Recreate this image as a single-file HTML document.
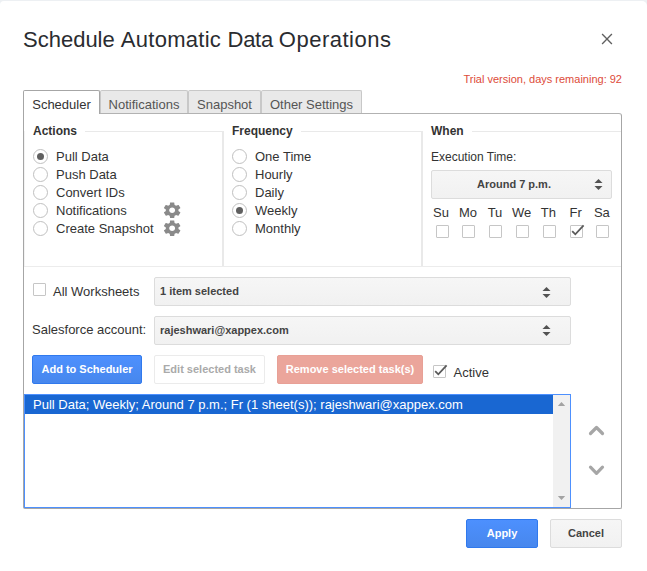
<!DOCTYPE html>
<html>
<head>
<meta charset="utf-8">
<title>Schedule Automatic Data Operations</title>
<style>
html,body{margin:0;padding:0;}
body{width:647px;height:571px;position:relative;overflow:hidden;background:#edf0f3;font-family:"Liberation Sans",sans-serif;font-size:13px;color:#333;}
.abs{position:absolute;white-space:nowrap;}
#topband{left:0;top:1px;width:647px;height:570px;background:#fff;border-radius:4px 5px 0 0;}
#title{left:23px;top:26px;font-size:22px;line-height:28px;color:#2a2c30;}
#trial{right:25px;top:72px;font-size:11px;line-height:14px;color:#dd4b39;}
.tab{top:90px;height:23px;line-height:27px;border:1px solid #c8c8c8;border-bottom:none;background:#e9e9e9;color:#555;font-size:13px;text-align:center;box-sizing:border-box;border-radius:2px 2px 0 0;}
.tab.active{background:#fff;color:#333;height:24px;border-color:#a6a6a6;z-index:2;}
#panel{left:23px;top:113px;width:599px;height:396px;border:1px solid #a6a6a6;border-top-color:#b2b2b2;box-sizing:border-box;border-radius:0 3px 2px 2px;}
.legend{font-weight:bold;font-size:12px;line-height:14px;color:#333;}
.hline{height:1px;background:#e9e9e9;}
.vline{width:2px;background:#e9e9e9;}
.radio{width:15px;height:15px;border:1px solid #c0c0c0;border-radius:50%;box-sizing:border-box;background:#fff;}
.radio.on::after{content:"";position:absolute;left:3px;top:3px;width:7px;height:7px;border-radius:50%;background:#606060;}
.lbl{font-size:13px;line-height:18px;color:#333;}
.day{font-size:13px;line-height:18px;color:#333;width:30px;text-align:center;top:204px;}
.cb{width:13px;height:13px;border:1px solid #c6c6c6;box-sizing:border-box;background:#fff;border-radius:1px;}
.sel{box-sizing:border-box;border:1px solid #dcdcdc;background:linear-gradient(#f6f6f6,#f1f1f1);border-radius:2px;font-weight:bold;font-size:11px;color:#444;height:29px;line-height:27px;}
.btn{box-sizing:border-box;height:29px;line-height:27px;font-size:11px;font-weight:bold;text-align:center;border-radius:2px;}
svg.abs{overflow:visible;}
</style>
</head>
<body>
<div class="abs" id="topband"></div>
<div class="abs" id="title"><span>Schedule </span><span style="letter-spacing:0.27px">Automatic </span><span style="letter-spacing:-0.26px">Data </span><span style="letter-spacing:0.5px">Operations</span></div>
<svg class="abs" style="left:600px;top:32px" width="14" height="14" viewBox="0 0 14 14"><path d="M2.1 2.1 L11.9 11.9 M11.9 2.1 L2.1 11.9" stroke="#606060" stroke-width="1.35" fill="none"/></svg>
<div class="abs" id="trial">Trial version, days remaining: 92</div>

<div class="abs tab active" style="left:23px;width:77px;">Scheduler</div>
<div class="abs tab" style="left:100px;width:88px;">Notifications</div>
<div class="abs tab" style="left:188px;width:73px;">Snapshot</div>
<div class="abs tab" style="left:261px;width:101px;">Other Settings</div>
<div class="abs" id="panel"></div>

<!-- Actions -->
<div class="abs legend" style="left:33px;top:124px;">Actions</div>
<div class="abs hline" style="left:85px;top:131px;width:139px;"></div>
<div class="abs vline" style="left:222px;top:131px;height:135px;"></div>
<div class="abs radio on" style="left:33px;top:149px;"></div><div class="abs lbl" style="left:56px;top:148px;">Pull Data</div>
<div class="abs radio" style="left:33px;top:167px;"></div><div class="abs lbl" style="left:56px;top:166px;">Push Data</div>
<div class="abs radio" style="left:33px;top:185px;"></div><div class="abs lbl" style="left:56px;top:184px;">Convert IDs</div>
<div class="abs radio" style="left:33px;top:203px;"></div><div class="abs lbl" style="left:56px;top:202px;">Notifications</div>
<div class="abs radio" style="left:33px;top:221px;"></div><div class="abs lbl" style="left:56px;top:220px;">Create Snapshot</div>
<svg class="abs" style="left:161.8px;top:201px" width="20.3" height="18.6" viewBox="0 0 24 24" preserveAspectRatio="none"><path fill="#8a8a8a" d="M19.43 12.98c.04-.32.07-.64.07-.98s-.03-.66-.07-.98l2.11-1.65c.19-.15.24-.42.12-.64l-2-3.46c-.12-.22-.39-.3-.61-.22l-2.49 1c-.52-.4-1.08-.73-1.69-.98l-.38-2.65C14.46 2.18 14.25 2 14 2h-4c-.25 0-.46.18-.49.42l-.38 2.65c-.61.25-1.17.59-1.69.98l-2.49-1c-.23-.09-.49 0-.61.22l-2 3.46c-.13.22-.07.49.12.64l2.11 1.65c-.04.32-.07.65-.07.98s.03.66.07.98l-2.11 1.65c-.19.15-.24.42-.12.64l2 3.46c.12.22.39.3.61.22l2.49-1c.52.4 1.08.73 1.69.98l.38 2.65c.03.24.24.42.49.42h4c.25 0 .46-.18.49-.42l.38-2.65c.61-.25 1.17-.59 1.69-.98l2.49 1c.23.09.49 0 .61-.22l2-3.46c.12-.22.07-.49-.12-.64l-2.11-1.65zM12 15.5c-1.93 0-3.5-1.57-3.5-3.5s1.57-3.5 3.5-3.5 3.5 1.57 3.5 3.5-1.57 3.5-3.5 3.5z"/></svg>
<svg class="abs" style="left:161.8px;top:219px" width="20.3" height="18.6" viewBox="0 0 24 24" preserveAspectRatio="none"><path fill="#8a8a8a" d="M19.43 12.98c.04-.32.07-.64.07-.98s-.03-.66-.07-.98l2.11-1.65c.19-.15.24-.42.12-.64l-2-3.46c-.12-.22-.39-.3-.61-.22l-2.49 1c-.52-.4-1.08-.73-1.69-.98l-.38-2.65C14.46 2.18 14.25 2 14 2h-4c-.25 0-.46.18-.49.42l-.38 2.65c-.61.25-1.17.59-1.69.98l-2.49-1c-.23-.09-.49 0-.61.22l-2 3.46c-.13.22-.07.49.12.64l2.11 1.65c-.04.32-.07.65-.07.98s.03.66.07.98l-2.11 1.65c-.19.15-.24.42-.12.64l2 3.46c.12.22.39.3.61.22l2.49-1c.52.4 1.08.73 1.69.98l.38 2.65c.03.24.24.42.49.42h4c.25 0 .46-.18.49-.42l.38-2.65c.61-.25 1.17-.59 1.69-.98l2.49 1c.23.09.49 0 .61-.22l2-3.46c.12-.22.07-.49-.12-.64l-2.11-1.65zM12 15.5c-1.93 0-3.5-1.57-3.5-3.5s1.57-3.5 3.5-3.5 3.5 1.57 3.5 3.5-1.57 3.5-3.5 3.5z"/></svg>

<!-- Frequency -->
<div class="abs legend" style="left:232px;top:124px;">Frequency</div>
<div class="abs hline" style="left:301px;top:131px;width:122px;"></div>
<div class="abs vline" style="left:421px;top:131px;height:135px;"></div>
<div class="abs radio" style="left:232px;top:149px;"></div><div class="abs lbl" style="left:255px;top:148px;">One Time</div>
<div class="abs radio" style="left:232px;top:167px;"></div><div class="abs lbl" style="left:255px;top:166px;">Hourly</div>
<div class="abs radio" style="left:232px;top:185px;"></div><div class="abs lbl" style="left:255px;top:184px;">Daily</div>
<div class="abs radio on" style="left:232px;top:203px;"></div><div class="abs lbl" style="left:255px;top:202px;">Weekly</div>
<div class="abs radio" style="left:232px;top:221px;"></div><div class="abs lbl" style="left:255px;top:220px;">Monthly</div>

<!-- When -->
<div class="abs legend" style="left:431px;top:124px;">When</div>
<div class="abs hline" style="left:472px;top:131px;width:149px;"></div>
<div class="abs" style="left:431px;top:150px;font-size:12px;line-height:14px;color:#333;">Execution Time:</div>
<div class="abs sel" style="left:431px;top:170px;width:181px;text-align:center;padding-right:15px;">Around 7 p.m.</div>
<svg class="abs" style="left:594px;top:179px" width="9" height="12" viewBox="0 0 9 12"><path fill="#525252" d="M0.5 4 L4.5 0 L8.5 4 Z M0.5 7 L8.5 7 L4.5 11 Z"/></svg>

<div class="abs day" style="left:426px;">Su</div>
<div class="abs day" style="left:453px;">Mo</div>
<div class="abs day" style="left:480px;">Tu</div>
<div class="abs day" style="left:506.6px;">We</div>
<div class="abs day" style="left:533.4px;">Th</div>
<div class="abs day" style="left:560.6px;">Fr</div>
<div class="abs day" style="left:586.9px;">Sa</div>
<div class="abs cb" style="left:436px;top:225px;"></div>
<div class="abs cb" style="left:462px;top:225px;"></div>
<div class="abs cb" style="left:489px;top:225px;"></div>
<div class="abs cb" style="left:516px;top:225px;"></div>
<div class="abs cb" style="left:543px;top:225px;"></div>
<div class="abs cb" style="left:570px;top:225px;"></div>
<div class="abs cb" style="left:596px;top:225px;"></div>
<svg class="abs" style="left:570px;top:223px" width="16" height="15" viewBox="0 0 16 15"><path d="M2.2 8.2 L5.3 11.3 L13.6 2.4" stroke="#5a5a5a" stroke-width="1.8" fill="none"/></svg>

<div class="abs hline" style="left:24px;top:266px;width:597px;background:#ececec;"></div>
<div class="abs" style="left:24px;top:131px;width:1px;height:135px;background:#f3f3f3;"></div>

<div class="abs cb" style="left:33px;top:283px;"></div>
<div class="abs lbl" style="left:53px;top:283px;">All Worksheets</div>
<div class="abs sel" style="left:154px;top:277px;width:417px;padding-left:5px;">1 item selected</div>
<svg class="abs" style="left:542px;top:287px" width="9" height="12" viewBox="0 0 9 12"><path fill="#525252" d="M0.5 4 L4.5 0 L8.5 4 Z M0.5 7 L8.5 7 L4.5 11 Z"/></svg>
<div class="abs lbl" style="left:32px;top:321px;">Salesforce account:</div>
<div class="abs sel" style="left:154px;top:316px;width:417px;padding-left:5px;">rajeshwari@xappex.com</div>
<svg class="abs" style="left:542px;top:325px" width="9" height="12" viewBox="0 0 9 12"><path fill="#525252" d="M0.5 4 L4.5 0 L8.5 4 Z M0.5 7 L8.5 7 L4.5 11 Z"/></svg>

<div class="abs btn" style="left:32px;top:355px;width:110px;background:linear-gradient(#4d90fe,#4787ed);border:1px solid #3079ed;color:#fff;">Add to Scheduler</div>
<div class="abs btn" style="left:154px;top:355px;width:111px;background:#fff;border:1px solid #ebebeb;color:#aaa;">Edit selected task</div>
<div class="abs btn" style="left:277px;top:355px;width:146px;background:#eba59b;border:1px solid #e8a096;color:#fff;">Remove selected task(s)</div>
<div class="abs cb" style="left:433px;top:365px;"></div>
<svg class="abs" style="left:433px;top:363px" width="16" height="15" viewBox="0 0 16 15"><path d="M2.2 8.2 L5.3 11.3 L13.6 2.4" stroke="#5a5a5a" stroke-width="1.8" fill="none"/></svg>
<div class="abs lbl" style="left:453.5px;top:364px;">Active</div>

<div class="abs" style="left:24px;top:394px;width:547px;height:114px;border:1px solid #4d90fe;box-sizing:border-box;background:#fff;"></div>
<div class="abs" style="left:25px;top:395px;width:528px;height:19px;background:#1967d2;color:#fff;font-size:13px;line-height:19px;padding-left:8px;box-sizing:border-box;">Pull Data; Weekly; Around 7 p.m.; Fr (1 sheet(s)); rajeshwari@xappex.com</div>
<div class="abs" style="left:553px;top:395px;width:17px;height:112px;background:#f1f1f1;"></div>
<svg class="abs" style="left:557px;top:402px" width="9" height="5" viewBox="0 0 9 5"><path fill="#a3a3a3" d="M0.8 4 L4.5 0.1 L8.2 4 Z"/></svg>
<svg class="abs" style="left:557px;top:496px" width="9" height="5" viewBox="0 0 9 5"><path fill="#a3a3a3" d="M0.8 0 L8.2 0 L4.5 3.9 Z"/></svg>

<svg class="abs" style="left:586px;top:420px" width="22" height="60" viewBox="0 0 22 60"><path d="M4.5 13.5 L10.5 7.5 L16.5 13.5 M4.5 47.2 L10.5 53.3 L16.5 47.2" stroke="#a6a6a6" stroke-width="3.2" stroke-linecap="round" stroke-linejoin="round" fill="none"/></svg>

<div class="abs btn" style="left:466px;top:519px;width:72px;background:linear-gradient(#4d90fe,#4787ed);border:1px solid #3079ed;color:#fff;">Apply</div>
<div class="abs btn" style="left:550px;top:519px;width:72px;background:linear-gradient(#f6f6f6,#f1f1f1);border:1px solid #dcdcdc;color:#444;">Cancel</div>
</body>
</html>
